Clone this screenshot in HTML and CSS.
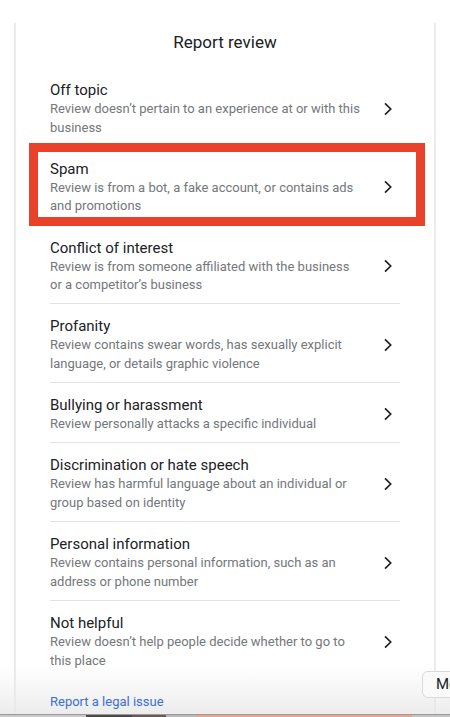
FILE: index.html
```html
<!DOCTYPE html>
<html lang="en">
<head>
<meta charset="utf-8">
<title>Report review</title>
<link rel="stylesheet" href="styles.css">
</head>
<body>
<div class="panel">
  <h1 class="header">Report review</h1>
  <ul class="list">
    <li class="row">
      <div class="text">
        <div class="title">Off topic</div>
        <div class="desc">Review doesn’t pertain to an experience at or with this business</div>
      </div>
      <svg class="chev" viewBox="0 0 24 24"><polyline points="9,6.4 14.7,12 9,17.6"/></svg>
    </li>
    <li class="row highlighted">
      <div class="text">
        <div class="title">Spam</div>
        <div class="desc">Review is from a bot, a fake account, or contains ads and promotions</div>
      </div>
      <svg class="chev" viewBox="0 0 24 24"><polyline points="9,6.4 14.7,12 9,17.6"/></svg>
      <span class="mark"></span>
    </li>
    <li class="row">
      <div class="text">
        <div class="title">Conflict of interest</div>
        <div class="desc">Review is from someone affiliated with the business or a competitor’s business</div>
      </div>
      <svg class="chev" viewBox="0 0 24 24"><polyline points="9,6.4 14.7,12 9,17.6"/></svg>
    </li>
    <li class="row">
      <div class="text">
        <div class="title">Profanity</div>
        <div class="desc">Review contains swear words, has sexually explicit language, or details graphic violence</div>
      </div>
      <svg class="chev" viewBox="0 0 24 24"><polyline points="9,6.4 14.7,12 9,17.6"/></svg>
    </li>
    <li class="row">
      <div class="text">
        <div class="title">Bullying or harassment</div>
        <div class="desc">Review personally attacks a specific individual</div>
      </div>
      <svg class="chev" viewBox="0 0 24 24"><polyline points="9,6.4 14.7,12 9,17.6"/></svg>
    </li>
    <li class="row">
      <div class="text">
        <div class="title">Discrimination or hate speech</div>
        <div class="desc">Review has harmful language about an individual or group based on identity</div>
      </div>
      <svg class="chev" viewBox="0 0 24 24"><polyline points="9,6.4 14.7,12 9,17.6"/></svg>
    </li>
    <li class="row">
      <div class="text">
        <div class="title">Personal information</div>
        <div class="desc">Review contains personal information, such as an address or phone number</div>
      </div>
      <svg class="chev" viewBox="0 0 24 24"><polyline points="9,6.4 14.7,12 9,17.6"/></svg>
    </li>
    <li class="row">
      <div class="text">
        <div class="title">Not helpful</div>
        <div class="desc">Review doesn’t help people decide whether to go to this place</div>
      </div>
      <svg class="chev" viewBox="0 0 24 24"><polyline points="9,6.4 14.7,12 9,17.6"/></svg>
    </li>
  </ul>
  <a class="legal" href="#">Report a legal issue</a>
</div>
<div class="fade"></div>
<div class="more">Mo</div>
<div class="strip"></div>
</body>
</html>
```
FILE: styles.css
```css
* { box-sizing: border-box; }
html, body {
  margin: 0;
  padding: 0;
  width: 450px;
  height: 717px;
  overflow: hidden;
  background: #fff;
  font-family: Roboto, "Noto Sans", Arial, sans-serif;
  color: #202124;
}
.panel {
  margin: 23px 0 0 14px;
  width: 422px;
  height: 700px;
  border-left: 2px solid #ebebeb;
  border-right: 2px solid #ebebeb;
  padding: 0 34px;
}
.header {
  margin: 0;
  padding: 8px 0 15px;
  font-size: 17px;
  line-height: 22px;
  font-weight: 400;
  text-align: center;
  color: #202124;
}
.list {
  list-style: none;
  margin: 0;
  padding: 0;
}
.row {
  position: relative;
  display: flex;
  align-items: center;
  gap: 16px;
  padding: 12px 0 8.8px;
  border-bottom: 1px solid #e3e3e3;
}
.row:last-child { border-bottom: none; }
.text { flex: 1; min-width: 0; }
.title {
  font-size: 15px;
  line-height: 20px;
  color: #202124;
}
.desc {
  font-size: 13px;
  line-height: 18.5px;
  color: #74777b;
}
.chev {
  width: 24px;
  height: 24px;
  flex: none;
  fill: none;
  stroke: #202124;
  stroke-width: 1.7;
}
.mark {
  position: absolute;
  left: -21px;
  right: -25px;
  top: -4px;
  bottom: -1px;
  border: 9px solid #e9412a;
  pointer-events: none;
}
.legal {
  position: relative;
  z-index: 2;
  display: block;
  padding-top: 14px;
  font-size: 13px;
  line-height: 18px;
  color: #3b6fd6;
  text-decoration: none;
}
.fade {
  position: absolute;
  z-index: 1;
  left: 0;
  right: 0;
  bottom: 3px;
  height: 48px;
  background: linear-gradient(to bottom, rgba(240,240,240,0), rgba(232,232,232,0.8));
  pointer-events: none;
}
.more {
  position: absolute;
  z-index: 3;
  left: 422px;
  top: 671px;
  width: 50px;
  height: 27px;
  padding-left: 13px;
  border: 1px solid #d9d9d9;
  border-radius: 6px;
  background: #fafafa;
  font-size: 15px;
  line-height: 25px;
  color: #202124;
}
.strip {
  position: absolute;
  z-index: 3;
  left: 0;
  right: 0;
  bottom: 0;
  height: 3px;
  border-top: 1px solid #9a9a9a;
  background: linear-gradient(to right, #c9c9c9 0 86px, #4a4a4a 86px 132px, #6b5a50 132px 166px, #b9b9b9 166px 196px, #e9a58a 196px 412px, #c4c4c4 412px);
}
```
